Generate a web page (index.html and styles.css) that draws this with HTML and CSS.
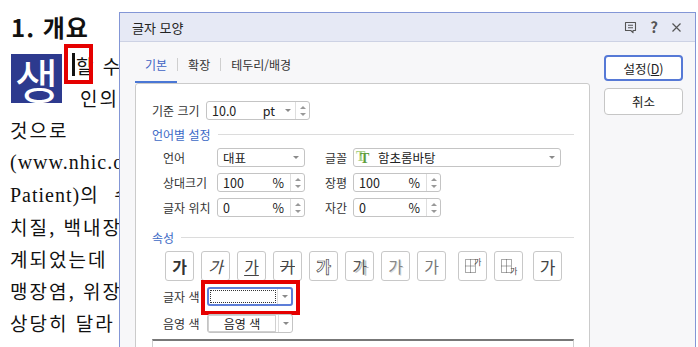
FILE: index.html
```html
<!DOCTYPE html>
<html lang="ko">
<head>
    <meta charset="UTF-8">
    <meta name="viewport" content="width=device-width, initial-scale=1.0">
    <title>글자 모양</title>
    <link rel="stylesheet" href="styles.css">
</head>
<body>

<div class="doc">
    <h1 class="doc-title">1. 개요</h1>
    <div class="lead">
        <div class="drop-cap">생</div>
        <div class="lead-lines">
            <div class="line"><span class="caret"><span class="caret-bar"></span><span class="mark caret-mark"></span></span>할&nbsp;수</div>
            <div class="line lead-indent">인의</div>
        </div>
    </div>
    <div class="line">것으로</div>
    <div class="line serif">(www.nhic.or.kr)</div>
    <div class="line"><span class="serif">Patient)</span>의&nbsp;&nbsp;수술</div>
    <div class="line">치질, 백내장</div>
    <div class="line">계되었는데</div>
    <div class="line">맹장염, 위장</div>
    <div class="line">상당히 달라</div>
</div>

<div class="dialog">
    <div class="titlebar">
        <span class="title">글자 모양</span>
        <div class="title-tools">
            <svg class="tool-icon" width="13" height="13" viewBox="0 0 13 13">
                <path d="M1.5 1.5h10v8h-2.5v2.2l-2.2-2.2h-5.3z" fill="none" stroke="#555" stroke-width="1.1" stroke-linejoin="round"/>
                <path d="M4 4.3h5M4 6.8h5" stroke="#555" stroke-width="1.1"/>
            </svg>
            <span class="help">?</span>
            <svg class="tool-icon" width="11" height="11" viewBox="0 0 11 11">
                <path d="M1.5 1.5l8 8M9.5 1.5l-8 8" stroke="#555" stroke-width="1.2"/>
            </svg>
        </div>
    </div>

    <div class="dialog-body">
        <div class="main">
            <div class="tabs">
                <span class="tab active">기본</span>
                <span class="tab-sep"></span>
                <span class="tab">확장</span>
                <span class="tab-sep"></span>
                <span class="tab">테두리/배경</span>
            </div>

            <div class="panel">
                <div class="row size-row">
                    <span class="label label-size">기준 크기</span>
                    <div class="field field-size">
                        <span class="val">10.0</span>
                        <span class="unit">pt</span>
                        <span class="drop"><i class="arrow"></i></span>
                        <span class="spin"><i class="up"></i><i class="down"></i></span>
                    </div>
                </div>

                <div class="section">언어별 설정</div>

                <div class="lang-rows">
                    <div class="row">
                        <span class="label label-lang">언어</span>
                        <div class="field field-short">
                            <span class="val">대표</span>
                            <span class="drop plain"><i class="arrow"></i></span>
                        </div>
                        <span class="label label-right">글꼴</span>
                        <div class="field field-font">
                            <span class="tt-icon">T</span>
                            <span class="val">함초롬바탕</span>
                            <span class="drop plain"><i class="arrow"></i></span>
                        </div>
                    </div>
                    <div class="row">
                        <span class="label label-lang">상대크기</span>
                        <div class="field field-short">
                            <span class="val">100</span>
                            <span class="unit">%</span>
                            <span class="spin"><i class="up"></i><i class="down"></i></span>
                        </div>
                        <span class="label label-right">장평</span>
                        <div class="field field-short">
                            <span class="val">100</span>
                            <span class="unit">%</span>
                            <span class="spin"><i class="up"></i><i class="down"></i></span>
                        </div>
                    </div>
                    <div class="row">
                        <span class="label label-lang">글자 위치</span>
                        <div class="field field-short">
                            <span class="val">0</span>
                            <span class="unit">%</span>
                            <span class="spin"><i class="up"></i><i class="down"></i></span>
                        </div>
                        <span class="label label-right">자간</span>
                        <div class="field field-short">
                            <span class="val">0</span>
                            <span class="unit">%</span>
                            <span class="spin"><i class="up"></i><i class="down"></i></span>
                        </div>
                    </div>
                </div>

                <div class="section section-attr">속성</div>

                <div class="attrs">
                    <span class="attr bold">가</span>
                    <span class="attr italic">가</span>
                    <span class="attr under">가</span>
                    <span class="attr strike">가</span>
                    <span class="attr outline">가</span>
                    <span class="attr shadow">가</span>
                    <span class="attr emboss">가</span>
                    <span class="attr engrave">가</span>
                    <span class="attr attr-gap">
                        <svg width="22" height="22" viewBox="0 0 22 22">
                            <g fill="none" stroke="#555" stroke-width="1" stroke-dasharray="1 1">
                                <rect x="3.5" y="4.5" width="10" height="13"/>
                                <path d="M3.5 11h10M8.5 4.5v13"/>
                            </g>
                            <text x="12" y="10" font-size="8" fill="#444" font-family="Noto Sans CJK KR">가</text>
                        </svg>
                    </span>
                    <span class="attr">
                        <svg width="22" height="22" viewBox="0 0 22 22">
                            <g fill="none" stroke="#555" stroke-width="1" stroke-dasharray="1 1">
                                <rect x="3.5" y="4.5" width="10" height="13"/>
                                <path d="M3.5 11h10M8.5 4.5v13"/>
                            </g>
                            <text x="12" y="18.5" font-size="8" fill="#444" font-family="Noto Sans CJK KR">가</text>
                        </svg>
                    </span>
                    <span class="attr attr-last">가</span>
                </div>

                <div class="row color-row">
                    <span class="label label-color">글자 색</span>
                    <div class="color-box focused">
                        <span class="swatch"></span>
                        <span class="drop"><i class="arrow"></i></span>
                        <span class="mark color-mark"></span>
                    </div>
                </div>
                <div class="row color-row shade-row">
                    <span class="label label-color">음영 색</span>
                    <div class="color-box">
                        <span class="swatch named">음영 색</span>
                        <span class="drop"><i class="arrow"></i></span>
                    </div>
                </div>

                <div class="preview"></div>
            </div>
        </div>

        <div class="buttons">
            <button class="btn primary">설정(<u>D</u>)</button>
            <button class="btn">취소</button>
        </div>
    </div>
</div>

<div class="edge"></div>

</body>
</html>
```

FILE: styles.css
```css
body {
    margin: 0;
    width: 698px;
    height: 347px;
    overflow: hidden;
    display: flex;
    background-color: #fff;
    font-family: "Noto Sans CJK KR", sans-serif;
    color: #222;
}

/* document behind the dialog */
.doc {
    width: 119px;
    flex: none;
    overflow: hidden;
    white-space: nowrap;
    padding-top: 12px;
    color: #111;
}
.doc-title {
    margin: 0 0 0 11px;
    font-size: 24px;
    line-height: 30px;
    font-weight: 700;
    letter-spacing: 1px;
}
.lead {
    display: flex;
    align-items: flex-start;
    margin-top: 8px;
}
.drop-cap {
    width: 51px;
    height: 49px;
    margin: 4px 0 0 11px;
    background-color: #2d3a8e;
    color: #fff;
    font-size: 48px;
    line-height: 48px;
    text-align: center;
    flex: none;
}
.lead-lines {
    margin-left: 2px;
}
.line {
    font-size: 19px;
    line-height: 32px;
    letter-spacing: 2px;
    padding-left: 10px;
}
.lead-lines .line {
    padding-left: 0;
}
.lead-lines .lead-indent {
    padding-left: 16px;
}
.serif {
    font-family: "Liberation Serif", "Noto Sans CJK KR", serif;
    font-size: 20px;
    letter-spacing: 1px;
}
.caret {
    position: relative;
    display: inline-block;
    width: 12px;
    height: 32px;
    vertical-align: top;
}
.caret-bar {
    position: absolute;
    left: 8px;
    top: 3px;
    width: 3px;
    height: 23px;
    background-color: #111;
}
.mark {
    position: absolute;
    border: 4px solid #e50000;
    box-sizing: border-box;
}
.caret-mark {
    left: 0;
    top: -6px;
    width: 29px;
    height: 40px;
}

/* dialog */
.dialog {
    width: 577px;
    height: 360px;
    flex: none;
    margin-top: 12px;
    border: 1px solid #8396d6;
    box-sizing: border-box;
    background-color: #f7f7f9;
    font-size: 12px;
}
.titlebar {
    height: 28px;
    display: flex;
    align-items: center;
    justify-content: space-between;
    padding: 0 13px 0 12px;
    background-color: #e6e9f5;
    border-bottom: 1px solid #cdd2e4;
}
.title {
    font-size: 13px;
    color: #222;
}
.title-tools {
    display: flex;
    align-items: center;
    gap: 13px;
}
.help {
    font-size: 15px;
    font-weight: 700;
    color: #555;
    line-height: 16px;
}

.dialog-body {
    display: flex;
    padding-left: 15px;
}
.main {
    width: 455px;
    flex: none;
}
.tabs {
    height: 41px;
    display: flex;
    align-items: flex-end;
}
.tab {
    padding: 0 10px 6px;
    line-height: 20px;
    border-bottom: 2px solid transparent;
    color: #333;
}
.tab.active {
    color: #3f63c4;
    border-bottom-color: #4a77d5;
}
.tab-sep {
    width: 1px;
    height: 13px;
    margin-bottom: 12px;
    background-color: #cfcfcf;
}
.panel {
    height: 300px;
    background-color: #fff;
    border: 1px solid #cbcbcb;
    border-radius: 3px 3px 0 0;
    padding: 17px 15px 0 16px;
}

.row {
    display: flex;
    align-items: center;
    height: 19px;
}
.label {
    color: #333;
    flex: none;
}
.label-size { width: 54px; }
.label-lang { width: 54px; }
.label-right { width: 28px; margin-left: 20px; }
.label-color { width: 44px; }

.field {
    display: flex;
    align-items: center;
    height: 19px;
    border: 1px solid #c4c4c4;
    border-radius: 3px;
    box-sizing: border-box;
    background-color: #fff;
    color: #222;
    flex: none;
}
.field-size { width: 104px; }
.field-short { width: 88px; }
.field-font { width: 208px; }
.val {
    flex: 1;
    padding-left: 5px;
    font-size: 12.5px;
    line-height: 17px;
}
.unit {
    padding-right: 6px;
    font-size: 12.5px;
    line-height: 17px;
}
.drop {
    width: 14px;
    height: 100%;
    display: flex;
    align-items: center;
    justify-content: center;
    border-right: 1px solid #dedede;
}
.drop.plain {
    border-right: none;
    width: 16px;
}
.arrow {
    width: 0;
    height: 0;
    border-left: 3px solid transparent;
    border-right: 3px solid transparent;
    border-top: 3px solid #8a8a8a;
}
.spin {
    width: 13px;
    height: 100%;
    display: flex;
    flex-direction: column;
    align-items: center;
    justify-content: center;
    gap: 4px;
    border-left: 1px solid #dedede;
}
.field-size .spin {
    border-left: none;
}
.up, .down {
    width: 0;
    height: 0;
    border-left: 3px solid transparent;
    border-right: 3px solid transparent;
}
.up { border-bottom: 3px solid #999; }
.down { border-top: 3px solid #999; }

/* green double-T font icon */
.tt-icon {
    width: 16px;
    margin-left: 6px;
    font-family: "Liberation Serif", serif;
    font-weight: 700;
    font-size: 14px;
    line-height: 15px;
    color: #5f9e3c;
    text-shadow: -4px -2px 0 #a6cf86;
    flex: none;
    padding-top: 2px;
}
.field-font .val { padding-left: 2px; }

.section {
    display: flex;
    align-items: center;
    gap: 7px;
    height: 18px;
    margin-top: 5px;
    color: #3d6ac6;
}
.section::after {
    content: "";
    flex: 1;
    height: 1px;
    background-color: #dcdcdc;
}
.section-attr {
    margin-top: 11px;
}

.lang-rows {
    display: flex;
    flex-direction: column;
    gap: 6px;
    margin-top: 5px;
    padding-left: 11px;
}

.attrs {
    display: flex;
    gap: 7px;
    margin-top: 5px;
    padding-left: 13px;
}
.attr {
    width: 29px;
    height: 30px;
    box-sizing: border-box;
    border: 1px solid #c8c8c8;
    border-radius: 3px;
    display: flex;
    align-items: center;
    justify-content: center;
    font-size: 16px;
    color: #444;
}
.attr-gap { margin-left: 5px; }
.attr-last { margin-left: 3px; font-size: 17px; }
.bold { font-weight: 700; color: #333; }
.italic { font-style: italic; }
.under { text-decoration: underline; text-underline-offset: 2px; }
.strike { text-decoration: line-through; }
.outline { color: #fff; font-weight: 700; -webkit-text-stroke: 0.7px #444; }
.shadow { color: #555; text-shadow: 2px 1px 0 #bdbdbd; }
.emboss { color: #888; text-shadow: 1px 1px 0 #ddd; }
.engrave { color: #777; }

.color-row {
    margin-top: 6px;
    padding-left: 11px;
}
.shade-row {
    margin-top: 8px;
}
.color-box {
    position: relative;
    width: 86px;
    height: 19px;
    box-sizing: border-box;
    display: flex;
    align-items: stretch;
    border: 1px solid #c4c4c4;
    border-radius: 3px;
    background-color: #fff;
}
.color-box.focused {
    border: 2px solid #5d7ed8;
}
.swatch {
    flex: 1;
    margin: 1px;
    border: 1px dotted #333;
}
.swatch.named {
    border: 1px solid #d0d0d0;
    margin: 0 2px 0 0;
    text-align: center;
    font-size: 12px;
    line-height: 16px;
    color: #222;
}
.color-box .drop {
    width: 13px;
    height: auto;
    border-right: none;
    border-left: 1px solid #dedede;
}
.color-mark {
    left: -8px;
    top: -9px;
    right: -9px;
    bottom: -11px;
}

.preview {
    margin-top: 6px;
    height: 40px;
    border: 1px solid #cfcfcf;
    border-top: 2px solid #777;
}

.buttons {
    width: 79px;
    margin: 13px 0 0 14px;
    display: flex;
    flex-direction: column;
    gap: 7px;
}
.btn {
    height: 27px;
    background-color: #fff;
    border: 1px solid #c6c6c6;
    border-radius: 4px;
    font-family: "Noto Sans CJK KR", sans-serif;
    font-size: 12.5px;
    color: #222;
    padding: 0;
}
.btn.primary {
    height: 26px;
    border: 2px solid #5679d6;
}

.edge {
    flex: 1;
}
```
